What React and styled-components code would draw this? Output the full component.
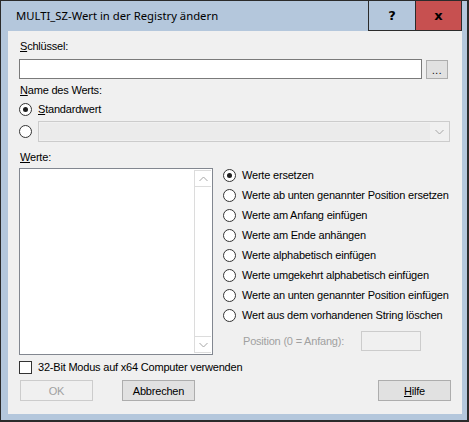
import React from "react";
import styled, { createGlobalStyle } from "styled-components";

const GlobalStyle = createGlobalStyle`
  html, body {
    margin: 0;
    padding: 0;
    background: #ffffff;
  }
  body {
    font-family: "Liberation Sans", Arial, sans-serif;
    font-size: 11px;
    letter-spacing: -0.2px;
    color: #000;
  }
`;

const Window = styled.div`
  width: 469px;
  height: 422px;
  box-sizing: border-box;
  border-style: solid;
  border-color: #2b2b2b;
  border-width: 1px 2px 2px 1px;
  background: #b4c7dc;
  display: flex;
  flex-direction: column;
`;

const TitleBar = styled.div`
  height: 30px;
  display: flex;
  align-items: stretch;
  padding-right: 5px;
`;

const Title = styled.div`
  flex: 1;
  padding-left: 15px;
  display: flex;
  align-items: center;
  font-family: "Noto Sans", "Open Sans", sans-serif;
  font-size: 11.3px;
  letter-spacing: 0;
  color: #000;
  padding-bottom: 1px;
`;

const CaptionButton = styled.div`
  width: 47px;
  box-sizing: border-box;
  border-left: 1px solid #2b2b2b;
  border-bottom: 1px solid #2b2b2b;
  border-right: ${(p) => (p.$close ? "1px solid #2b2b2b" : "none")};
  background: ${(p) => (p.$close ? "#c75050" : "transparent")};
  display: flex;
  align-items: center;
  justify-content: center;
  font-family: "DejaVu Sans", sans-serif;
  font-weight: bold;
  font-size: 13px;
  letter-spacing: 0;
  color: #000;
`;

const Body = styled.div`
  flex: 1;
  margin: 0 5px 6px 7px;
  background: #f0f0f0;
  padding: 9px 11px 0 11px;
  display: flex;
  flex-direction: column;
`;

const Label = styled.div`
  line-height: 13px;
  height: 13px;
  margin-left: 1px;
  margin-top: ${(p) => p.$top || 0}px;
  color: ${(p) => (p.$disabled ? "#a0a0a0" : "#000")};
  white-space: nowrap;
`;

const Row = styled.div`
  display: flex;
  align-items: center;
  height: ${(p) => p.$h || 20}px;
  margin-top: ${(p) => p.$top || 0}px;
`;

const TextBox = styled.div`
  width: ${(p) => p.$w}px;
  height: 20px;
  flex: none;
  box-sizing: border-box;
  border: 1px solid ${(p) => (p.$disabled ? "#cccccc" : "#7a7a7a")};
  background: ${(p) => (p.$disabled ? "#f0f0f0" : "#fff")};
`;

const BrowseButton = styled.div`
  width: 22px;
  height: 19px;
  margin-left: 4px;
  margin-top: 1px;
  box-sizing: border-box;
  border: 1px solid #adadad;
  background: #e1e1e1;
  display: flex;
  align-items: flex-end;
  justify-content: center;
  padding-bottom: 3px;
  font-size: 10px;
  line-height: 8px;
  letter-spacing: 0.5px;
`;

const RadioCircle = styled.span`
  width: 13px;
  height: 13px;
  box-sizing: border-box;
  border-radius: 50%;
  border: 1px solid #333333;
  background: #fff;
  flex: none;
  display: flex;
  align-items: center;
  justify-content: center;
  margin-right: 6px;
  &::after {
    content: "";
    width: 5px;
    height: 5px;
    border-radius: 50%;
    background: #1f1f1f;
    display: ${(p) => (p.$checked ? "block" : "none")};
  }
`;

const OptionText = styled.span`
  white-space: nowrap;
  line-height: 13px;
`;

const Combo = styled.div`
  width: 412px;
  height: 21px;
  box-sizing: border-box;
  border: 1px solid #cccccc;
  background: #f0f0f0;
  display: flex;
  align-items: center;
  padding: 1px;
`;

const ComboField = styled.div`
  width: 390px;
  height: 17px;
  background: #ebebeb;
`;

const ComboArrow = styled.div`
  flex: 1;
  display: flex;
  align-items: center;
  justify-content: center;
`;

const Main = styled.div`
  display: flex;
  margin-top: 1px;
`;

const ListBox = styled.div`
  width: 194px;
  height: 187px;
  flex: none;
  margin-top: 3px;
  box-sizing: border-box;
  border: 1px solid #828790;
  background: #fff;
  display: flex;
  justify-content: flex-end;
  padding: 1px;
`;

const ScrollBar = styled.div`
  width: 17px;
  box-sizing: border-box;
  border: 1px solid #dcdcdc;
  border-right: none;
  display: flex;
  flex-direction: column;
  justify-content: space-between;
`;

const ScrollButton = styled.div`
  height: 16px;
  box-sizing: border-box;
  border-top: ${(p) => (p.$down ? "1px solid #dcdcdc" : "none")};
  border-bottom: ${(p) => (p.$down ? "none" : "1px solid #dcdcdc")};
  display: flex;
  align-items: center;
  justify-content: center;
`;

const Options = styled.div`
  width: 227px;
  flex: none;
  margin-left: 10px;
  display: flex;
  flex-direction: column;
`;

const PositionRow = styled.div`
  display: flex;
  align-items: center;
  height: 20px;
  margin-top: 6px;
  padding-left: 19px;
`;

const PositionBox = styled(TextBox)`
  margin-left: auto;
  margin-right: 29px;
`;

const CheckBox = styled.span`
  width: 13px;
  height: 13px;
  box-sizing: border-box;
  border: 1px solid #333333;
  background: #fff;
  flex: none;
  margin-right: 6px;
`;

const ButtonRow = styled.div`
  display: flex;
  margin-top: 3px;
  padding-left: 1px;
`;

const PushButton = styled.div`
  width: 73px;
  height: 21px;
  box-sizing: border-box;
  border: 1px solid ${(p) => (p.$disabled ? "#cccccc" : "#adadad")};
  background: ${(p) => (p.$disabled ? "#f0f0f0" : "#e1e1e1")};
  color: ${(p) => (p.$disabled ? "#a0a0a0" : "#000")};
  display: flex;
  align-items: center;
  justify-content: center;
  margin-left: ${(p) => p.$gap || 0}px;
  ${(p) => (p.$push ? "margin-left: auto;" : "")}
`;

const Chevron = ({ up }) => (
  <svg width="9" height="6" viewBox="0 0 9 6">
    <polyline
      points={up ? "0.5,5 4.5,1 8.5,5" : "0.5,1 4.5,5 8.5,1"}
      fill="none"
      stroke="#a6a6a6"
      strokeWidth="1"
    />
  </svg>
);

const Radio = ({ checked, children }) => (
  <Row>
    <RadioCircle $checked={checked} />
    <OptionText>{children}</OptionText>
  </Row>
);

const modes = [
  "Werte ersetzen",
  "Werte ab unten genannter Position ersetzen",
  "Werte am Anfang einfügen",
  "Werte am Ende anhängen",
  "Werte alphabetisch einfügen",
  "Werte umgekehrt alphabetisch einfügen",
  "Werte an unten genannter Position einfügen",
  "Wert aus dem vorhandenen String löschen",
];

export default function App() {
  return (
    <>
      <GlobalStyle />
      <Window>
        <TitleBar>
          <Title>MULTI_SZ-Wert in der Registry ändern</Title>
          <CaptionButton>?</CaptionButton>
          <CaptionButton $close>x</CaptionButton>
        </TitleBar>
        <Body>
          <Label>
            <u>S</u>chlüssel:
          </Label>
          <Row $top={6}>
            <TextBox $w={403} />
            <BrowseButton>...</BrowseButton>
          </Row>
          <Label $top={5}>
            <u>N</u>ame des Werts:
          </Label>
          <Row $top={2}>
            <RadioCircle $checked />
            <OptionText>
              <u>S</u>tandardwert
            </OptionText>
          </Row>
          <Row $top={2} $h={21}>
            <RadioCircle />
            <Combo>
              <ComboField />
              <ComboArrow>
                <Chevron />
              </ComboArrow>
            </Combo>
          </Row>
          <Label $top={9}>
            <u>W</u>erte:
          </Label>
          <Main>
            <ListBox>
              <ScrollBar>
                <ScrollButton>
                  <Chevron up />
                </ScrollButton>
                <ScrollButton $down>
                  <Chevron />
                </ScrollButton>
              </ScrollBar>
            </ListBox>
            <Options>
              {modes.map((m, i) => (
                <Radio key={m} checked={i === 0}>
                  {m}
                </Radio>
              ))}
              <PositionRow>
                <Label as="span" $disabled>
                  Position (0 = Anfang):
                </Label>
                <PositionBox $w={60} $disabled />
              </PositionRow>
            </Options>
          </Main>
          <Row $top={2}>
            <CheckBox />
            <OptionText>32-Bit Modus auf x64 Computer verwenden</OptionText>
          </Row>
          <ButtonRow>
            <PushButton $disabled>OK</PushButton>
            <PushButton $gap={29}>Abbrechen</PushButton>
            <PushButton $push>
              <span>
                <u>H</u>ilfe
              </span>
            </PushButton>
          </ButtonRow>
        </Body>
      </Window>
    </>
  );
}
